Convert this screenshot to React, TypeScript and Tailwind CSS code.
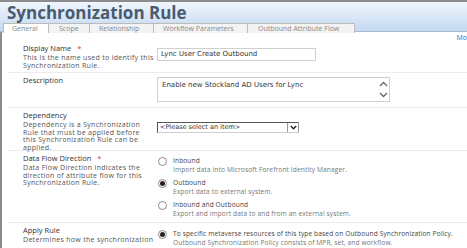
const Radio = ({ checked }: { checked?: boolean }) => (
  <span className="mt-[1px] flex h-[9px] w-[9px] shrink-0 items-center justify-center rounded-full border border-[#8a8a8a] bg-white">
    {checked && <span className="h-[5px] w-[5px] rounded-full bg-[#222]" />}
  </span>
);

const Chevron = ({ up }: { up?: boolean }) => (
  <svg width="9" height="6" viewBox="0 0 9 6" className="block">
    <path
      d={up ? "M1 5 L4.5 1.5 L8 5" : "M1 1 L4.5 4.5 L8 1"}
      fill="none"
      stroke="#666"
      strokeWidth="1.3"
    />
  </svg>
);

const Row = ({
  label,
  required,
  desc,
  children,
  className,
}: {
  label: string;
  required?: boolean;
  desc?: string[];
  children?: React.ReactNode;
  className?: string;
}) => (
  <div className={`ml-[6px] flex border-b border-[#ececec] ${className ?? ""}`}>
    <div className="w-[145px] shrink-0 pl-[15px] pt-[3px]">
      <div className="text-[7.5px] leading-[9px] text-[#333]">
        {label}
        {required && <span className="ml-[6px] text-[#e0323c]">*</span>}
      </div>
      {desc && (
        <div className="mt-[1px] whitespace-nowrap text-[7px] leading-[7.5px] tracking-[0.3px] text-[#555]">
          {desc.map((line) => (
            <div key={line}>{line}</div>
          ))}
        </div>
      )}
    </div>
    <div className="flex-1 pl-[4px]">{children}</div>
  </div>
);

const RadioOption = ({
  checked,
  title,
  sub,
}: {
  checked?: boolean;
  title: string;
  sub: string;
}) => (
  <div className="flex gap-[6px]">
    <Radio checked={checked} />
    <div className="text-[6.6px] leading-[9px] tracking-[0.12px]">
      <div className="text-[#444]">{title}</div>
      <div className="text-[#777]">{sub}</div>
    </div>
  </div>
);

export default function App() {
  return (
    <div className="h-[248px] w-[467px] overflow-hidden bg-white font-['Open_Sans',sans-serif]">
      <div className="h-[32px] border-t-2 border-b border-[#8c8c8c] border-b-[#a9bdd6] bg-gradient-to-b from-[#f0f6fd] to-[#c3d8f1]">
        <div className="pl-[7px] pt-[1px] text-[17px] font-bold leading-[19px] text-[#4a5b70]">
          Synchronization Rule
        </div>
        <div className="mt-[1px] flex pl-[3px] text-[7px] leading-[8px] text-[#888]">
          <div className="h-[10px] w-[46px] border-x border-t border-[#bbb] bg-white pl-[8px] pt-[1px]">General</div>
          <div className="h-[10px] w-[41px] border-r border-t border-[#bbb] bg-[#f3f3f3] pl-[10px] pt-[1px]">Scope</div>
          <div className="h-[10px] w-[64px] border-r border-t border-[#bbb] bg-[#f3f3f3] pl-[9px] pt-[1px]">Relationship</div>
          <div className="h-[10px] w-[94px] border-r border-t border-[#bbb] bg-[#f3f3f3] pl-[9px] pt-[1px]">Workflow Parameters</div>
          <div className="h-[10px] w-[107px] border-r border-t border-[#bbb] bg-[#f3f3f3] pl-[10px] pt-[1px]">Outbound Attribute Flow</div>
        </div>
      </div>
      <div className="h-[216px] border-l-2 border-[#8c8c8c]">
        <div className="flex h-[9px] justify-end pt-[2px] text-[7px] leading-[7px] text-[#3467c8]">
          Mo
        </div>
        <Row
          label="Display Name"
          required
          desc={["This is the name used to identify this", "Synchronization Rule."]}
          className="h-[32px]"
        >
          <div className="mt-[7px] h-[13px] w-[159px] border border-[#cfcfcf] pl-[3px] font-['DejaVu_Sans',sans-serif] text-[7px] leading-[11px] text-[#333]">
            Lync User Create Outbound
          </div>
        </Row>
        <Row label="Description" className="h-[35px]">
          <div className="mt-[4px] flex h-[25px] w-[233px] border border-[#cfcfcf] font-['DejaVu_Sans',sans-serif] text-[7px] leading-[8px] text-[#333]">
            <div className="flex-1 pl-[4px] pt-[3px]">Enable new Stockland AD Users for Lync</div>
            <div className="flex w-[12px] flex-col items-center justify-between py-[3px]">
              <Chevron up />
              <Chevron />
            </div>
          </div>
        </Row>
        <Row
          label="Dependency"
          desc={[
            "Dependency is a Synchronization",
            "Rule that must be applied before",
            "this Synchronization Rule can be",
            "applied.",
          ]}
          className="h-[43px]"
        >
          <div className="mt-[14px] flex h-[11px] w-[142px] border border-[#555] border-r-[#999] border-b-[#ccc] font-['DejaVu_Sans',sans-serif] text-[6.5px] leading-[9px] text-[#333]">
            <div className="flex-1 pl-[2px]">&lt;Please select an item&gt;</div>
            <div className="flex w-[11px] items-center justify-center border-l border-[#999]">
              <svg width="7" height="5" viewBox="0 0 7 5">
                <path d="M0.8 1 L3.5 3.8 L6.2 1" fill="none" stroke="#222" strokeWidth="1.3" />
              </svg>
            </div>
          </div>
        </Row>
        <Row
          label="Data Flow Direction"
          required
          desc={[
            "Data Flow Direction indicates the",
            "direction of attribute flow for this",
            "Synchronization Rule.",
          ]}
          className="h-[72px]"
        >
          <div className="flex flex-col gap-[4px] pl-[1px] pt-[5px]">
            <RadioOption title="Inbound" sub="Import data into Microsoft Forefront Identity Manager." />
            <RadioOption checked title="Outbound" sub="Export data to external system." />
            <RadioOption title="Inbound and Outbound" sub="Export and import data to and from an external system." />
          </div>
        </Row>
        <div className="ml-[6px] flex">
          <div className="w-[145px] shrink-0 pl-[15px] pt-[3px]">
            <div className="text-[7.5px] leading-[9px] text-[#333]">Apply Rule</div>
            <div className="mt-[1px] whitespace-nowrap text-[7px] leading-[7.5px] tracking-[0.3px] text-[#555]">
              Determines how the synchronization
            </div>
          </div>
          <div className="flex-1 pl-[5px] pt-[6px]">
            <RadioOption
              checked
              title="To specific metaverse resources of this type based on Outbound Synchronization Policy."
              sub="Outbound Synchronization Policy consists of MPR, set, and workflow."
            />
          </div>
        </div>
      </div>
    </div>
  );
}
